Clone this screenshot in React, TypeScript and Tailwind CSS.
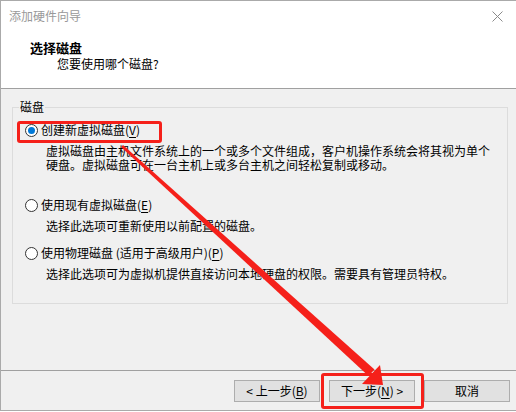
import React from "react";

function Radio({ checked }: { checked?: boolean }) {
  return (
    <span className="flex h-[13px] w-[13px] shrink-0 items-center justify-center rounded-full border border-[#333] bg-white">
      {checked && <span className="h-[7px] w-[7px] rounded-full bg-[#0078d7]" />}
    </span>
  );
}

function Option({
  checked,
  label,
  desc,
  className,
}: {
  checked?: boolean;
  label: React.ReactNode;
  desc: string[];
  className?: string;
}) {
  return (
    <div className={className}>
      <div className="flex h-[14px] items-center gap-[3px] pl-[12px]">
        <Radio checked={checked} />
        <span>{label}</span>
      </div>
      <div className="mt-[7px] pl-[33px]">
        {desc.map((d) => (
          <div key={d}>{d}</div>
        ))}
      </div>
    </div>
  );
}

function Button({ children }: { children: React.ReactNode }) {
  return (
    <div className="flex h-[22px] w-[86px] items-center justify-center border border-[#adadad] bg-[#e1e1e1]">
      {children}
    </div>
  );
}

const u = (c: string) => <span className="underline underline-offset-2">{c}</span>;

export default function App() {
  return (
    <div className="relative h-[412px] w-[516px] overflow-hidden bg-white font-['Noto_Sans_CJK_SC',sans-serif] text-[12px] leading-[14px] text-black">
      <div className="flex h-[411px] flex-col border-b border-l border-t border-[#aaaaaa]">
        {/* title bar */}
        <div className="flex h-[30px] shrink-0 items-center justify-between bg-white pl-[8px] pr-[13px]">
          <span className="text-[#999999]">添加硬件向导</span>
          <svg width="11" height="11" viewBox="0 0 11 11">
            <path d="M0.5 0.5 L10.5 10.5 M10.5 0.5 L0.5 10.5" stroke="#8a8a8a" strokeWidth="1" />
          </svg>
        </div>

        {/* header */}
        <div className="h-[58px] shrink-0 border-b border-[#a0a0a0] bg-white pt-[10px]">
          <div className="pl-[29px] text-[13px] font-bold">选择磁盘</div>
          <div className="mt-[2px] pl-[56px]">您要使用哪个磁盘?</div>
        </div>

        {/* body */}
        <div className="flex-1 border-b border-[#a0a0a0] bg-[#f0f0f0] pl-[11px] pr-[8px] pt-[18px]">
          <div className="relative border border-[#dcdcdc] pb-[22px] pt-[15px]">
            <span className="absolute left-[6px] top-[-8px] bg-[#f0f0f0] px-[1px]">磁盘</span>
            <Option
              checked
              label={<>创建新虚拟磁盘({u("V")})</>}
              desc={[
                "虚拟磁盘由主机文件系统上的一个或多个文件组成，客户机操作系统会将其视为单个",
                "硬盘。虚拟磁盘可在一台主机上或多台主机之间轻松复制或移动。",
              ]}
            />
            <Option
              className="mt-[26px]"
              label={<>使用现有虚拟磁盘({u("E")})</>}
              desc={["选择此选项可重新使用以前配置的磁盘。"]}
            />
            <Option
              className="mt-[13px]"
              label={<>使用物理磁盘 (适用于高级用户)({u("P")})</>}
              desc={["选择此选项可为虚拟机提供直接访问本地硬盘的权限。需要具有管理员特权。"]}
            />
          </div>
        </div>

        {/* buttons */}
        <div className="flex h-[39px] shrink-0 items-start justify-end gap-[9px] bg-[#f0f0f0] pr-[6px] pt-[9px]">
          <Button>&lt; 上一步({u("B")})</Button>
          <Button>下一步({u("N")}) &gt;</Button>
          <Button>取消</Button>
        </div>
      </div>

      {/* annotations */}
      <div className="absolute left-[17px] top-[121px] h-[22px] w-[145px] rounded-[3px] border-[3px] border-[#f5201a]" />
      <div className="absolute left-[321px] top-[373px] h-[36px] w-[103px] rounded-[3px] border-[3px] border-[#f5201a]" />
      <svg className="pointer-events-none absolute left-0 top-0" width="516" height="412" viewBox="0 0 516 412">
        <polygon points="121,147 123,145 374.5,369.5 368.5,376" fill="#f5201a" />
        <polygon points="383,385 362,384 380,365" fill="#f5201a" />
      </svg>
    </div>
  );
}
